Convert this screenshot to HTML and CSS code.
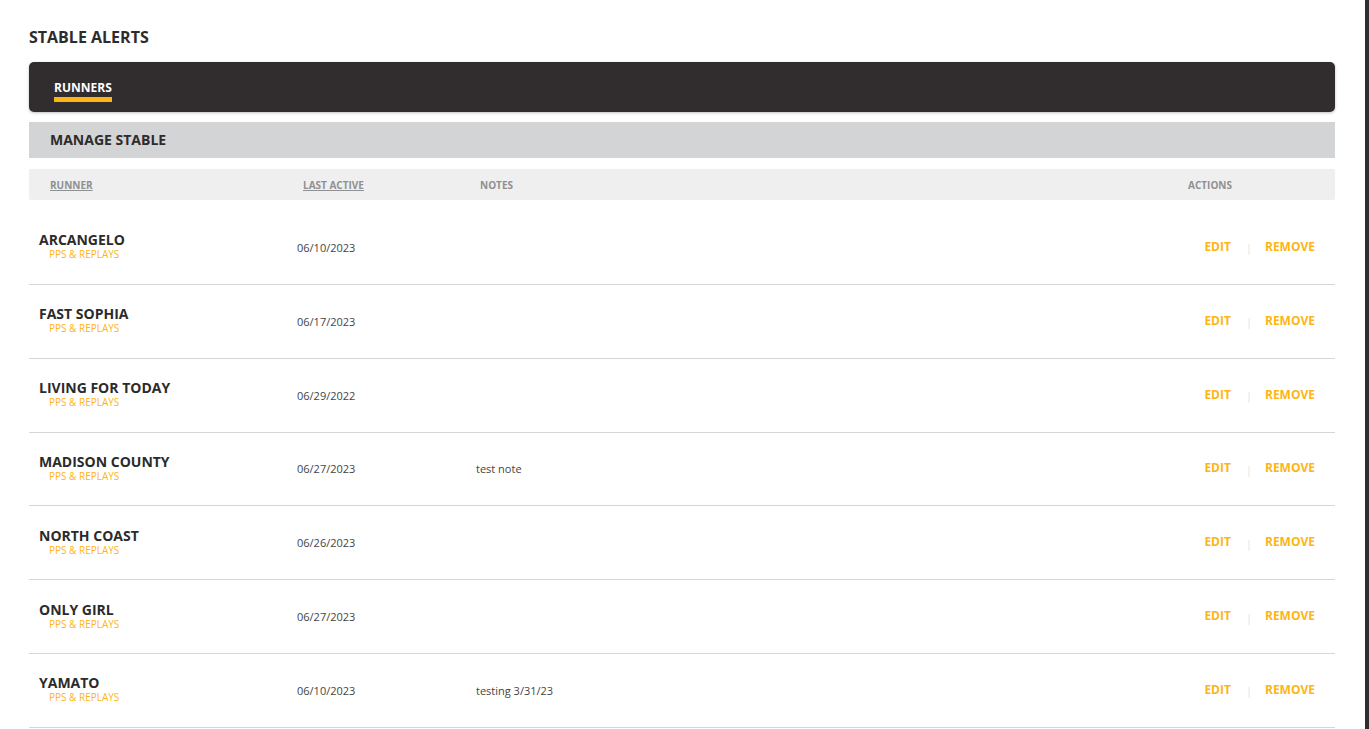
FILE: index.html
```html
<!DOCTYPE html>
<html lang="en">
<head>
    <meta charset="UTF-8">
    <meta name="viewport" content="width=device-width, initial-scale=1.0">
    <title>Stable Alerts</title>
    <link rel="stylesheet" href="styles.css">
</head>
<body>
    <div class="page">
        <main class="content">
            <h1 class="page-title">STABLE ALERTS</h1>

            <nav class="tabs">
                <a class="tab active" href="#">RUNNERS</a>
            </nav>

            <div class="section-bar">MANAGE STABLE</div>

            <div class="table-head">
                <span class="th sortable">RUNNER</span>
                <span class="th sortable">LAST ACTIVE</span>
                <span class="th">NOTES</span>
                <span class="th th-actions">ACTIONS</span>
            </div>

            <div class="table-body">
                <div class="row">
                    <div class="runner"><span class="name">ARCANGELO</span><a class="sub" href="#">PPS &amp; REPLAYS</a></div>
                    <div class="date">06/10/2023</div>
                    <div class="note"></div>
                    <div class="actions"><a href="#">EDIT</a><span class="sep">|</span><a href="#">REMOVE</a></div>
                </div>
                <div class="row">
                    <div class="runner"><span class="name">FAST SOPHIA</span><a class="sub" href="#">PPS &amp; REPLAYS</a></div>
                    <div class="date">06/17/2023</div>
                    <div class="note"></div>
                    <div class="actions"><a href="#">EDIT</a><span class="sep">|</span><a href="#">REMOVE</a></div>
                </div>
                <div class="row">
                    <div class="runner"><span class="name">LIVING FOR TODAY</span><a class="sub" href="#">PPS &amp; REPLAYS</a></div>
                    <div class="date">06/29/2022</div>
                    <div class="note"></div>
                    <div class="actions"><a href="#">EDIT</a><span class="sep">|</span><a href="#">REMOVE</a></div>
                </div>
                <div class="row">
                    <div class="runner"><span class="name">MADISON COUNTY</span><a class="sub" href="#">PPS &amp; REPLAYS</a></div>
                    <div class="date">06/27/2023</div>
                    <div class="note">test note</div>
                    <div class="actions"><a href="#">EDIT</a><span class="sep">|</span><a href="#">REMOVE</a></div>
                </div>
                <div class="row">
                    <div class="runner"><span class="name">NORTH COAST</span><a class="sub" href="#">PPS &amp; REPLAYS</a></div>
                    <div class="date">06/26/2023</div>
                    <div class="note"></div>
                    <div class="actions"><a href="#">EDIT</a><span class="sep">|</span><a href="#">REMOVE</a></div>
                </div>
                <div class="row">
                    <div class="runner"><span class="name">ONLY GIRL</span><a class="sub" href="#">PPS &amp; REPLAYS</a></div>
                    <div class="date">06/27/2023</div>
                    <div class="note"></div>
                    <div class="actions"><a href="#">EDIT</a><span class="sep">|</span><a href="#">REMOVE</a></div>
                </div>
                <div class="row">
                    <div class="runner"><span class="name">YAMATO</span><a class="sub" href="#">PPS &amp; REPLAYS</a></div>
                    <div class="date">06/10/2023</div>
                    <div class="note">testing 3/31/23</div>
                    <div class="actions"><a href="#">EDIT</a><span class="sep">|</span><a href="#">REMOVE</a></div>
                </div>
            </div>
        </main>
        <div class="side-edge"></div>
    </div>
</body>
</html>
```

FILE: styles.css
```css
body {
    font-family: "Open Sans", Arial, sans-serif;
    background-color: #fff;
    color: #2e2b2c;
    margin: 0;
    padding: 0;
    overflow: hidden;
}

a {
    text-decoration: none;
}

.page {
    display: flex;
    height: 729px;
}

.content {
    flex: 1;
    padding: 26px 30px 0 29px;
}

.side-edge {
    width: 4px;
    background-color: #312d2e;
}

.page-title {
    margin: 0 0 14px;
    font-size: 16px;
    font-weight: 700;
    line-height: 22px;
    color: #2e2b2c;
}

/* Tabs */
.tabs {
    display: flex;
    height: 50px;
    padding-left: 25px;
    background-color: #312d2e;
    border-radius: 5px;
    box-shadow: 0 1px 3px rgba(0, 0, 0, 0.25);
}

.tab {
    padding-top: 17px;
    font-size: 12px;
    font-weight: 700;
    line-height: 17px;
    color: #fff;
}

.tab.active {
    border-bottom: 5px solid #fdb515;
    height: 18px;
}

.section-bar {
    margin-top: 10px;
    height: 36px;
    padding-left: 21px;
    display: flex;
    align-items: center;
    background-color: #d3d4d6;
    font-size: 14px;
    font-weight: 700;
    line-height: 18px;
    color: #2e2b2c;
}

/* Table */
.table-head {
    margin-top: 11px;
    height: 31px;
    display: grid;
    grid-template-columns: 253px 177px 1fr auto;
    align-items: center;
    padding: 0 103px 0 21px;
    background-color: #efefef;
    border-radius: 2px;
}

.th {
    font-size: 10px;
    font-weight: 700;
    color: #8f9092;
}

.th.sortable {
    text-decoration: underline;
}

.table-body {
    margin-top: 11px;
}

.row {
    height: 72.85px;
    display: grid;
    grid-template-columns: 258px 179px 1fr auto;
    align-items: center;
    padding: 0 20px 0 10px;
    border-bottom: 1px solid #d6d6d6;
}

.runner {
    display: flex;
    flex-direction: column;
    margin-top: -2px;
}

.name {
    font-size: 14px;
    font-weight: 700;
    line-height: 16px;
    color: #2b2b2b;
}

.sub {
    padding-left: 10px;
    font-size: 10px;
    line-height: 12px;
    color: #fdb515;
}

.date,
.note {
    font-size: 11px;
    color: #444;
}

.actions {
    display: flex;
    align-items: center;
    margin-top: -2px;
}

.actions a {
    font-size: 12px;
    font-weight: 700;
    color: #fdb515;
}

.sep {
    margin: 3px 13px 0 15px;
    font-size: 11px;
    color: #ecdde3;
}
```
